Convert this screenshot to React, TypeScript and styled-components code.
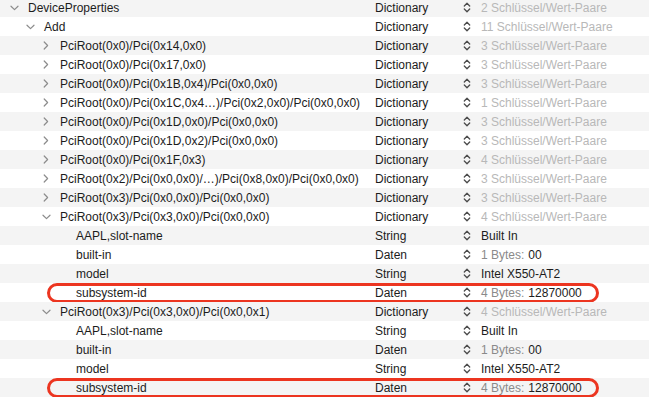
import React from "react";
import styled, { createGlobalStyle } from "styled-components";

const Global = createGlobalStyle`
  html, body { margin: 0; padding: 0; background: #ffffff; }
  body { font-family: "Liberation Sans", Arial, sans-serif; overflow: hidden; }
`;

type Val =
  | { kind: "count"; text: string }
  | { kind: "plain"; text: string }
  | { kind: "bytes"; prefix: string; data: string };

interface Row {
  level: number;
  chevron?: "open" | "closed";
  name: string;
  type: string;
  value: Val;
  marked?: boolean;
}

const cnt = (n: number): Val => ({ kind: "count", text: `${n} Schlüssel/Wert-Paare` });

const rows: Row[] = [
  { level: 0, chevron: "open", name: "DeviceProperties", type: "Dictionary", value: cnt(2) },
  { level: 1, chevron: "open", name: "Add", type: "Dictionary", value: cnt(11) },
  { level: 2, chevron: "closed", name: "PciRoot(0x0)/Pci(0x14,0x0)", type: "Dictionary", value: cnt(3) },
  { level: 2, chevron: "closed", name: "PciRoot(0x0)/Pci(0x17,0x0)", type: "Dictionary", value: cnt(3) },
  { level: 2, chevron: "closed", name: "PciRoot(0x0)/Pci(0x1B,0x4)/Pci(0x0,0x0)", type: "Dictionary", value: cnt(3) },
  { level: 2, chevron: "closed", name: "PciRoot(0x0)/Pci(0x1C,0x4…)/Pci(0x2,0x0)/Pci(0x0,0x0)", type: "Dictionary", value: cnt(1) },
  { level: 2, chevron: "closed", name: "PciRoot(0x0)/Pci(0x1D,0x0)/Pci(0x0,0x0)", type: "Dictionary", value: cnt(3) },
  { level: 2, chevron: "closed", name: "PciRoot(0x0)/Pci(0x1D,0x2)/Pci(0x0,0x0)", type: "Dictionary", value: cnt(3) },
  { level: 2, chevron: "closed", name: "PciRoot(0x0)/Pci(0x1F,0x3)", type: "Dictionary", value: cnt(4) },
  { level: 2, chevron: "closed", name: "PciRoot(0x2)/Pci(0x0,0x0)/…)/Pci(0x8,0x0)/Pci(0x0,0x0)", type: "Dictionary", value: cnt(3) },
  { level: 2, chevron: "closed", name: "PciRoot(0x3)/Pci(0x0,0x0)/Pci(0x0,0x0)", type: "Dictionary", value: cnt(3) },
  { level: 2, chevron: "open", name: "PciRoot(0x3)/Pci(0x3,0x0)/Pci(0x0,0x0)", type: "Dictionary", value: cnt(4) },
  { level: 3, name: "AAPL,slot-name", type: "String", value: { kind: "plain", text: "Built In" } },
  { level: 3, name: "built-in", type: "Daten", value: { kind: "bytes", prefix: "1 Bytes:", data: "00" } },
  { level: 3, name: "model", type: "String", value: { kind: "plain", text: "Intel X550-AT2" } },
  { level: 3, name: "subsystem-id", type: "Daten", value: { kind: "bytes", prefix: "4 Bytes:", data: "12870000" }, marked: true },
  { level: 2, chevron: "open", name: "PciRoot(0x3)/Pci(0x3,0x0)/Pci(0x0,0x1)", type: "Dictionary", value: cnt(4) },
  { level: 3, name: "AAPL,slot-name", type: "String", value: { kind: "plain", text: "Built In" } },
  { level: 3, name: "built-in", type: "Daten", value: { kind: "bytes", prefix: "1 Bytes:", data: "00" } },
  { level: 3, name: "model", type: "String", value: { kind: "plain", text: "Intel X550-AT2" } },
  { level: 3, name: "subsystem-id", type: "Daten", value: { kind: "bytes", prefix: "4 Bytes:", data: "12870000" }, marked: true },
  { level: 3, name: "", type: "", value: { kind: "plain", text: "" } },
];

const Outline = styled.div`
  width: 649px;
  height: 399px;
  overflow: hidden;
`;

const List = styled.div`
  display: flex;
  flex-direction: column;
  margin-top: -2px;
`;

const RowBox = styled.div<{ $striped: boolean }>`
  position: relative;
  display: grid;
  grid-template-columns: 375px 86px 1fr;
  align-items: center;
  height: 19px;
  background: ${(p) => (p.$striped ? "#f4f4f4" : "#ffffff")};
  font-size: 12px;
  color: #1c1c1c;
  white-space: nowrap;
`;

const KeyCell = styled.div<{ $level: number }>`
  display: flex;
  align-items: center;
  padding-left: ${(p) => 6 + p.$level * 16}px;
  overflow: hidden;
`;

const Disclosure = styled.span`
  display: flex;
  align-items: center;
  justify-content: center;
  width: 16px;
  height: 19px;
  margin-right: 6px;
  flex: none;
`;

const TypeCell = styled.div`
  overflow: hidden;
`;

const ValueCell = styled.div`
  display: flex;
  align-items: center;
  padding-left: 2px;
`;

const Stepper = styled.span`
  display: flex;
  align-items: center;
  width: 8px;
  margin-right: 10px;
  flex: none;
`;

const Muted = styled.span<{ $tone: "light" | "mid" }>`
  color: ${(p) => (p.$tone === "light" ? "#b8b8b8" : "#8a8a8a")};
`;

const Data = styled.span`
  margin-left: 4px;
  color: #1c1c1c;
`;

const Mark = styled.div`
  position: absolute;
  left: 47px;
  width: 552px;
  top: -0.5px;
  bottom: -0.5px;
  border: 3px solid #ec3520;
  border-radius: 10px;
  box-sizing: border-box;
  pointer-events: none;
`;

const Chevron = ({ open }: { open: boolean }) =>
  open ? (
    <svg width="9" height="6" viewBox="0 0 9 6">
      <path d="M1 1.2 L4.5 4.6 L8 1.2" fill="none" stroke="#8c8c8c" strokeWidth="1.2" strokeLinecap="round" strokeLinejoin="round" />
    </svg>
  ) : (
    <svg width="6" height="9" viewBox="0 0 6 9">
      <path d="M1.2 1 L4.6 4.5 L1.2 8" fill="none" stroke="#8c8c8c" strokeWidth="1.2" strokeLinecap="round" strokeLinejoin="round" />
    </svg>
  );

const StepIcon = () => (
  <svg width="8" height="11" viewBox="0 0 8 11">
    <path d="M1.3 4 L4 1.3 L6.7 4 M1.3 7 L4 9.7 L6.7 7" fill="none" stroke="#4a4a4a" strokeWidth="1.3" strokeLinecap="round" strokeLinejoin="round" />
  </svg>
);

const ValueView = ({ v }: { v: Val }) => {
  if (v.kind === "count") return <Muted $tone="light">{v.text}</Muted>;
  if (v.kind === "bytes")
    return (
      <span>
        <Muted $tone="mid">{v.prefix}</Muted>
        <Data>{v.data}</Data>
      </span>
    );
  return <span>{v.text}</span>;
};

export default function App() {
  return (
    <Outline>
      <Global />
      <List>
        {rows.map((r, i) => (
          <RowBox key={i} $striped={i % 2 === 0}>
            <KeyCell $level={r.level}>
              <Disclosure>{r.chevron ? <Chevron open={r.chevron === "open"} /> : null}</Disclosure>
              <span>{r.name}</span>
            </KeyCell>
            <TypeCell>{r.type}</TypeCell>
            <ValueCell>
              {r.type ? (
                <Stepper>
                  <StepIcon />
                </Stepper>
              ) : null}
              <ValueView v={r.value} />
            </ValueCell>
            {r.marked ? <Mark /> : null}
          </RowBox>
        ))}
      </List>
    </Outline>
  );
}
